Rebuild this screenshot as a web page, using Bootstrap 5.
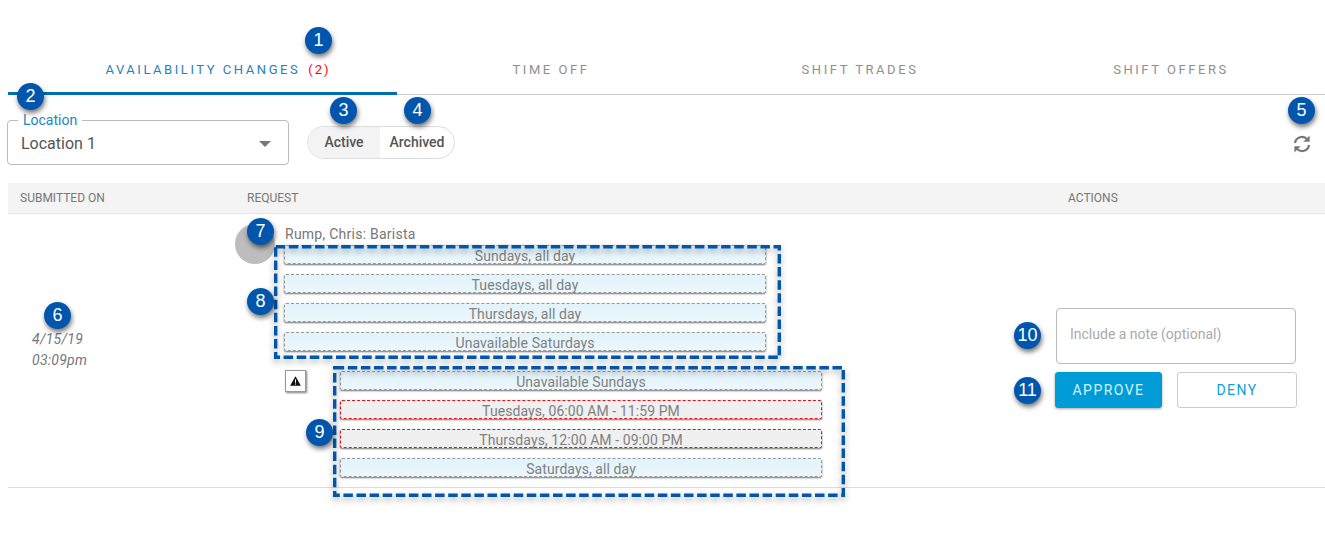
<!DOCTYPE html>
<html lang="en">
<head>
<meta charset="utf-8">
<title>Availability changes</title>
<link href="https://cdn.jsdelivr.net/npm/bootstrap@5.3.0/dist/css/bootstrap.min.css" rel="stylesheet">
<style>
html,body{height:540px;overflow:hidden;background:#fff}
body{font-family:Roboto,"Liberation Sans",sans-serif;color:#666;position:relative}
.page{padding:0 0 0 8px}
.tabbar{height:95px;border-bottom:1px solid #ccc}
.tabitem{display:flex;align-items:flex-end;justify-content:center;padding:0 0 16px 2px;font-size:13px;letter-spacing:2.55px;color:#8f8f8f;text-transform:uppercase;margin-bottom:-1px}
.tab-a{width:389px;color:#1f82b9;border-bottom:3px solid #0070ab;padding:0 0 13px 31px}
.tab-a .cnt{color:#f00;margin-left:8px;letter-spacing:2px}
.tab-b{width:306px}.tab-c{width:312px}.tab-d{width:310px}
.toolbar{height:88px}
.locfield{width:282px;height:45px;margin:25px 0 0 -1px;border:1px solid #bbb;border-radius:4px;position:relative;padding:12px 13px 0;font-size:16px;color:#555;line-height:21px}
.loclabel{position:absolute;left:10px;top:-8px;background:#fff;padding:0 5px;font-size:14px;line-height:15px;color:#1a86c4}
.caret-d{position:absolute;right:17px;top:20px;width:0;height:0;border-left:6.5px solid transparent;border-right:6.5px solid transparent;border-top:6.5px solid #777}
.seg{margin:31px 0 0 18px;width:148px;height:33px;border:1px solid #ddd;border-radius:17px;overflow:hidden;font-size:14px;font-weight:500;color:#555}
.seg-on{width:72px;background:#f3f3f3;text-align:center;line-height:31px}
.seg-off{flex:1;text-align:center;line-height:31px}
.refresh{margin:39px 13px 0 auto;width:20px;height:20px}
.thead{height:31px;background:#f4f4f4;border-bottom:1px solid #e4e4e4;font-size:12px;color:#777;line-height:31px;text-transform:uppercase}
.th1{width:239px;padding-left:12px}.th2{width:821px}
.trow{height:274px;border-bottom:1px solid #ddd}
.tdate{width:98px;padding:115px 0 0 24px;font-style:italic;font-size:14px;line-height:21px;color:#777;letter-spacing:.25px}
.treq{width:1000px;padding-left:129px;position:relative}
.avatar{position:absolute;left:129px;top:10px;width:40px;height:40px;border-radius:50%;background:#bdbdbd}
.rname{margin:12px 0 0 50px;font-size:14px;font-weight:400;line-height:16px;color:#777;height:19px;letter-spacing:.25px}
.chips{display:flex;flex-direction:column;gap:10px;width:482px;margin-left:49px}
.chip{height:19px;border:1px dashed #999;border-radius:2px;background:linear-gradient(#e2f3fb,#ebf7fc);box-shadow:0 1px 2px rgba(0,0,0,.55);text-align:center;font-size:14px;line-height:20px;color:#808080;letter-spacing:.08px}
.chip-red{border-color:#e8111b;background:#f0f0f0}
.lower{display:flex;margin:20px 0 0 50px}
.warn{width:21px;height:22px;margin:-1px 34px 0 0;border:1px solid #999;background:#fff;box-shadow:1px 1px 2px rgba(0,0,0,.5);display:flex;align-items:center;justify-content:center}
.lower .chips{margin-left:0}
.tact{position:absolute;left:1055px;top:308px;width:242px}
.note{margin-left:1px;width:240px;height:56px;border:1px solid #bbb;border-radius:4px;padding:16px 13px;font-size:14px;line-height:18px;color:#aaa}
.acts{margin-top:8px}
.btn-appr,.btn-deny{height:36px;padding:0;border-radius:3px;font-size:14px;letter-spacing:1.45px;line-height:34px}
.btn-appr{width:107px;background:#009cd8;border:1px solid #009cd8;color:#d6f0fa;box-shadow:0 1px 3px rgba(0,0,0,.35)}
.btn-deny{width:120px;margin-left:15px;background:#fff;border:1px solid #ccc;color:#0d9fd8}
.pin{position:absolute;width:27px;height:27px;border-radius:50%;background:#0056ac;color:#fff;font:18px/27px "Liberation Sans",sans-serif;text-align:center;box-shadow:1px 3px 5px rgba(0,0,0,.55);z-index:5}
.p1{left:305px;top:27px}.p2{left:17px;top:83px}.p3{left:330px;top:97px}.p4{left:404px;top:97px}.p5{left:1288px;top:97px}
.p6{left:44px;top:302px}.p7{left:247px;top:218px}.p8{left:247px;top:288px}.p9{left:306px;top:419px}.p10{left:1014px;top:322px}.p11{left:1014px;top:377px}
.dash{position:absolute;z-index:4;overflow:visible;filter:drop-shadow(0 3px 3px rgba(0,0,0,.35))}
.dash rect{fill:none;stroke:#0056ac;stroke-width:3.4;stroke-dasharray:9.5 3.6}
.d1{left:274px;top:245px}
.d2{left:333px;top:366px}
</style>
</head>
<body>
<div class="page">
  <div class="tabbar d-flex">
    <div class="tabitem tab-a">Availability Changes<span class="cnt">(2)</span></div>
    <div class="tabitem tab-b">Time Off</div>
    <div class="tabitem tab-c">Shift Trades</div>
    <div class="tabitem tab-d">Shift Offers</div>
  </div>
  <div class="toolbar d-flex align-items-start">
    <div class="locfield"><span class="loclabel">Location</span>Location 1<span class="caret-d"></span></div>
    <div class="seg d-flex"><div class="seg-on">Active</div><div class="seg-off">Archived</div></div>
    <svg class="refresh" viewBox="0 0 20 20" fill="none" stroke="#777" stroke-width="2.2">
      <path d="M3 9a7 7 0 0 1 12.3-3.6"/><path d="M17 11a7 7 0 0 1-12.3 3.6"/>
      <path d="M17.6 1.6v6.2h-6.2z" fill="#777" stroke="none"/><path d="M2.4 18.4v-6.2h6.2z" fill="#777" stroke="none"/>
    </svg>
  </div>
  <div class="thead d-flex">
    <div class="th1">Submitted On</div>
    <div class="th2">Request</div>
    <div>Actions</div>
  </div>
  <div class="trow d-flex">
    <div class="tdate">4/15/19<br>03:09pm</div>
    <div class="treq">
      <div class="avatar"></div>
      <div class="rname">Rump, Chris: Barista</div>
      <div class="chips">
        <div class="chip">Sundays, all day</div>
        <div class="chip">Tuesdays, all day</div>
        <div class="chip">Thursdays, all day</div>
        <div class="chip">Unavailable Saturdays</div>
      </div>
      <div class="lower">
        <div class="warn"><svg width="11" height="10" viewBox="0 0 11 10"><path d="M5.5.3 10.9 9.7H.1z" fill="#111"/><rect x="5" y="3.4" width="1" height="3.4" fill="#fff"/><rect x="5" y="7.5" width="1" height="1.1" fill="#fff"/></svg></div>
        <div class="chips">
          <div class="chip">Unavailable Sundays</div>
          <div class="chip chip-red">Tuesdays, 06:00 AM - 11:59 PM</div>
          <div class="chip chip-red">Thursdays, 12:00 AM - 09:00 PM</div>
          <div class="chip">Saturdays, all day</div>
        </div>
      </div>
    </div>
  </div>
</div>
<div class="tact">
  <div class="note">Include a note (optional)</div>
  <div class="acts d-flex">
    <button class="btn btn-appr" type="button">APPROVE</button>
    <button class="btn btn-deny" type="button">DENY</button>
  </div>
</div>
<svg class="dash d1" width="507" height="114"><rect x="1.7" y="1.7" width="503.6" height="110.6"/></svg>
<svg class="dash d2" width="512" height="131"><rect x="1.7" y="1.7" width="508.6" height="127.6"/></svg>
<div class="pin p1">1</div><div class="pin p2">2</div><div class="pin p3">3</div><div class="pin p4">4</div><div class="pin p5">5</div><div class="pin p6">6</div><div class="pin p7">7</div><div class="pin p8">8</div><div class="pin p9">9</div><div class="pin p10">10</div><div class="pin p11">11</div>
</body>
</html>
